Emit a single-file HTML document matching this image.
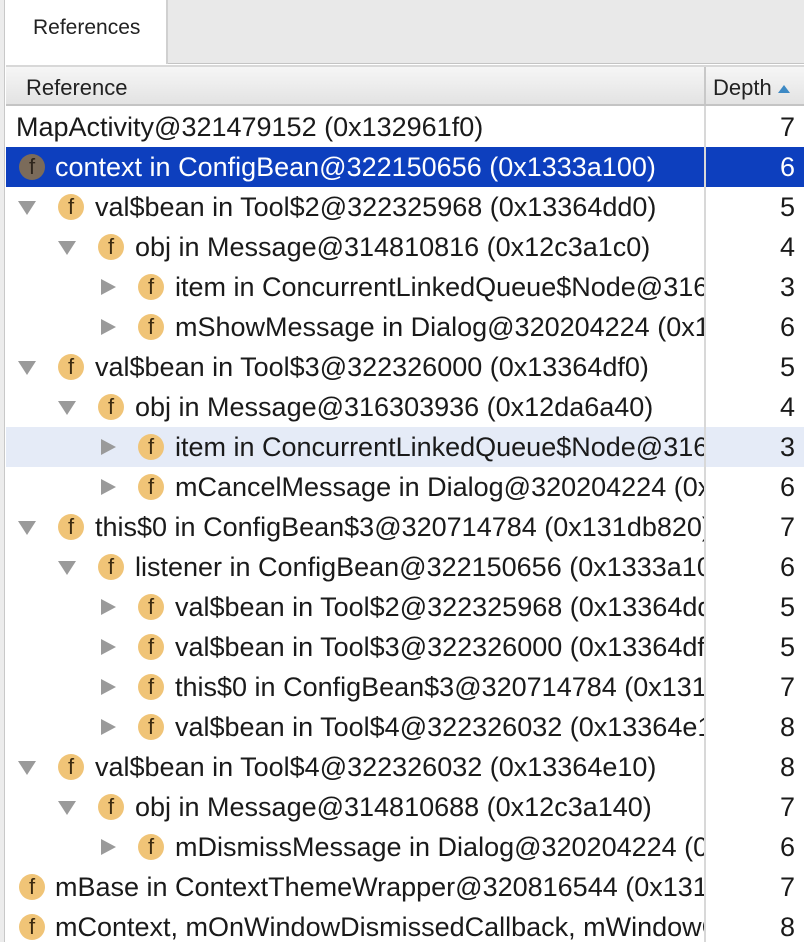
<!DOCTYPE html>
<html><head><meta charset="utf-8"><style>
*{margin:0;padding:0;box-sizing:border-box}
body{width:804px;height:942px;overflow:hidden;background:#fff;font-family:"Liberation Sans",sans-serif;position:relative}
.lb{position:absolute;left:0;top:0;width:5px;height:942px;background:#ececec;border-right:1px solid #c8c8c8}
.tabbar{position:absolute;left:6px;top:0;width:798px;height:64px;background:#e9e9e9;border-bottom:1px solid #c4c4c4}
.tab{position:absolute;left:0;top:0;width:162px;height:64px;background:#fff;border-right:2px solid #d0d0d0;font-size:21px;color:#222;padding:16px 0 0 27px}
.hdr{position:absolute;left:6px;top:65px;width:798px;height:41px;background:linear-gradient(#f6f6f6,#e3e3e3);border-top:2px solid #d8d8d8;border-bottom:2px solid #c4c4c4;font-size:22px;color:#222}
.hdr .a{position:absolute;left:20px;top:8px}
.hdr .b{position:absolute;left:698px;top:0;height:37px;border-left:2px solid #c8c8c8;padding:8px 0 0 7px;width:100px}
.tri{display:inline-block;width:0;height:0;border-left:6px solid transparent;border-right:6px solid transparent;border-bottom:8px solid #3d89c4;margin-left:6px;vertical-align:2px}
.vl{position:absolute;left:704px;top:106px;width:2px;height:836px;background:#d8d8d8}
.row{position:absolute;left:6px;width:798px;height:40px;font-size:27px;color:#1a1a1a;white-space:nowrap}
.row .t{position:absolute;top:5px}
.clip{position:absolute;left:0;top:0;width:698px;height:40px;overflow:hidden}
.row .d{position:absolute;right:9px;top:5px}
.ic{position:absolute;top:7px;width:26px;height:26px;border-radius:50%;background:#f0c477;color:#3a2a10;font-size:22px;text-align:center;line-height:26px}
.ar{position:absolute;width:0;height:0}
.ar.r{top:12px;border-top:8px solid transparent;border-bottom:8px solid transparent;border-left:15px solid #9a9a9a}
.ar.dn{top:14px;border-left:9px solid transparent;border-right:9px solid transparent;border-top:14px solid #9a9a9a}
.sel{background:#0d3fbe;color:#fff}
.sel .ic{background:#7b6b5a;color:#2e251c}
.hov{background:#e5ebf7}
</style></head><body>
<div class="lb"></div>
<div class="tabbar"><div class="tab">References</div></div>
<div class="hdr"><span class="a">Reference</span><span class="b">Depth<span class="tri"></span></span></div>

<div class="row" style="top:107px"><div class="clip"><span class="t" style="left:10px">MapActivity@321479152 (0x132961f0)</span></div><span class="d">7</span></div>
<div class="row sel" style="top:147px"><div class="clip"><span class="ic" style="left:13px">f</span><span class="t" style="left:49px">context in ConfigBean@322150656 (0x1333a100)</span></div><span class="d">6</span></div>
<div class="row" style="top:187px"><div class="clip"><span class="ar dn" style="left:12px"></span><span class="ic" style="left:52px">f</span><span class="t" style="left:89px">val$bean in Tool$2@322325968 (0x13364dd0)</span></div><span class="d">5</span></div>
<div class="row" style="top:227px"><div class="clip"><span class="ar dn" style="left:52px"></span><span class="ic" style="left:92px">f</span><span class="t" style="left:129px">obj in Message@314810816 (0x12c3a1c0)</span></div><span class="d">4</span></div>
<div class="row" style="top:267px"><div class="clip"><span class="ar r" style="left:95px"></span><span class="ic" style="left:132px">f</span><span class="t" style="left:169px">item in ConcurrentLinkedQueue$Node@316303936</span></div><span class="d">3</span></div>
<div class="row" style="top:307px"><div class="clip"><span class="ar r" style="left:95px"></span><span class="ic" style="left:132px">f</span><span class="t" style="left:169px">mShowMessage in Dialog@320204224 (0x1316c3c0)</span></div><span class="d">6</span></div>
<div class="row" style="top:347px"><div class="clip"><span class="ar dn" style="left:12px"></span><span class="ic" style="left:52px">f</span><span class="t" style="left:89px">val$bean in Tool$3@322326000 (0x13364df0)</span></div><span class="d">5</span></div>
<div class="row" style="top:387px"><div class="clip"><span class="ar dn" style="left:52px"></span><span class="ic" style="left:92px">f</span><span class="t" style="left:129px">obj in Message@316303936 (0x12da6a40)</span></div><span class="d">4</span></div>
<div class="row hov" style="top:427px"><div class="clip"><span class="ar r" style="left:95px"></span><span class="ic" style="left:132px">f</span><span class="t" style="left:169px">item in ConcurrentLinkedQueue$Node@316303936</span></div><span class="d">3</span></div>
<div class="row" style="top:467px"><div class="clip"><span class="ar r" style="left:95px"></span><span class="ic" style="left:132px">f</span><span class="t" style="left:169px">mCancelMessage in Dialog@320204224 (0x1316c3c0)</span></div><span class="d">6</span></div>
<div class="row" style="top:507px"><div class="clip"><span class="ar dn" style="left:12px"></span><span class="ic" style="left:52px">f</span><span class="t" style="left:89px">this$0 in ConfigBean$3@320714784 (0x131db820)</span></div><span class="d">7</span></div>
<div class="row" style="top:547px"><div class="clip"><span class="ar dn" style="left:52px"></span><span class="ic" style="left:92px">f</span><span class="t" style="left:129px">listener in ConfigBean@322150656 (0x1333a100)</span></div><span class="d">6</span></div>
<div class="row" style="top:587px"><div class="clip"><span class="ar r" style="left:95px"></span><span class="ic" style="left:132px">f</span><span class="t" style="left:169px">val$bean in Tool$2@322325968 (0x13364dd0)</span></div><span class="d">5</span></div>
<div class="row" style="top:627px"><div class="clip"><span class="ar r" style="left:95px"></span><span class="ic" style="left:132px">f</span><span class="t" style="left:169px">val$bean in Tool$3@322326000 (0x13364df0)</span></div><span class="d">5</span></div>
<div class="row" style="top:667px"><div class="clip"><span class="ar r" style="left:95px"></span><span class="ic" style="left:132px">f</span><span class="t" style="left:169px">this$0 in ConfigBean$3@320714784 (0x131db820)</span></div><span class="d">7</span></div>
<div class="row" style="top:707px"><div class="clip"><span class="ar r" style="left:95px"></span><span class="ic" style="left:132px">f</span><span class="t" style="left:169px">val$bean in Tool$4@322326032 (0x13364e10)</span></div><span class="d">8</span></div>
<div class="row" style="top:747px"><div class="clip"><span class="ar dn" style="left:12px"></span><span class="ic" style="left:52px">f</span><span class="t" style="left:89px">val$bean in Tool$4@322326032 (0x13364e10)</span></div><span class="d">8</span></div>
<div class="row" style="top:787px"><div class="clip"><span class="ar dn" style="left:52px"></span><span class="ic" style="left:92px">f</span><span class="t" style="left:129px">obj in Message@314810688 (0x12c3a140)</span></div><span class="d">7</span></div>
<div class="row" style="top:827px"><div class="clip"><span class="ar r" style="left:95px"></span><span class="ic" style="left:132px">f</span><span class="t" style="left:169px">mDismissMessage in Dialog@320204224 (0x1316c3c0)</span></div><span class="d">6</span></div>
<div class="row" style="top:867px"><div class="clip"><span class="ic" style="left:13px">f</span><span class="t" style="left:49px">mBase in ContextThemeWrapper@320816544 (0x131f4ca0)</span></div><span class="d">7</span></div>
<div class="row" style="top:907px"><div class="clip"><span class="ic" style="left:13px">f</span><span class="t" style="left:49px">mContext, mOnWindowDismissedCallback, mWindowControllerCallback</span></div><span class="d">8</span></div>
<div class="vl"></div>
</body></html>
